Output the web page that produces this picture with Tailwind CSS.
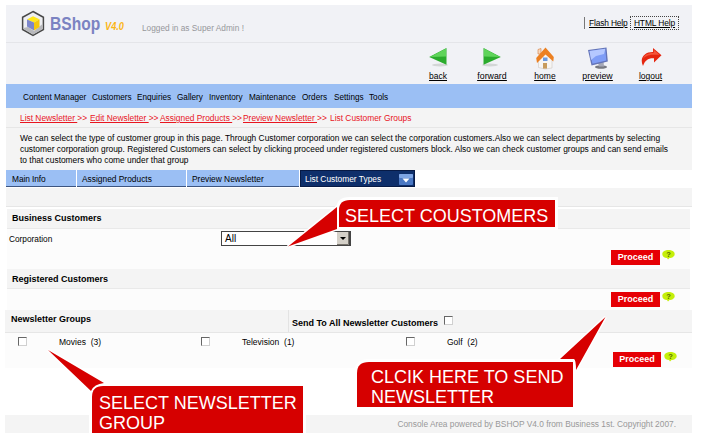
<!DOCTYPE html>
<html lang="en">
<head>
<meta charset="utf-8">
<title>BShop V4.0</title>
<script src="https://cdn.jsdelivr.net/npm/@tailwindcss/browser@4"></script>
</head>
<body class="bg-white">
<div class="relative w-[702px] h-[439px] overflow-hidden pt-[5px] pl-[6px] font-['Liberation_Sans',Arial,sans-serif] text-[8.5px] leading-[11px] text-black whitespace-nowrap">
  <header class="w-[686px] h-[79px] bg-[#f1f2f6]">
    <div class="h-[38px] flex border-b border-[#e4e5e9]">
      <svg class="w-[24px] h-[27px] ml-[15px] mt-[5px] shrink-0" viewBox="0 0 24 27">
        <path d="M12 1.5 22.4 7.3V19.5L12 25.5 1.6 19.5V7.3Z" fill="#eeeff2" stroke="#484848" stroke-width="1.5"/>
        <path d="M2.5 18 7 17 13 21 21.5 14V19.3L12 24.5 2.5 19Z" fill="#b7b8bc"/>
        <path d="M12 6.2 18.5 9.3 13 12.5 6 9.5Z" fill="#ffe81c"/>
        <path d="M6 9.500 13 12.5V20.500L6 16.500Z" fill="#7c86cb"/>
        <path d="M13 12.5 18.500 9.300V17L13 20.500Z" fill="#f3c70d"/>
      </svg>
      <b class="ml-[5px] mt-[9px] w-[50px] text-[17.5px] leading-[20px] text-[#7b83c2]"><span class="inline-block origin-left scale-x-[.89]">BShop</span></b>
      <b class="ml-[5px] mt-[16px] w-[37px] italic text-[10px] leading-[12px] text-[#fbb615]"><span class="inline-block origin-left scale-x-[.92]">V4.0</span></b>
      <span class="mt-[18px] text-[8.3px] text-[#96979b]">Logged in as Super Admin !</span>
      <div class="ml-auto mr-[13px] mt-[11px] h-[14px] flex text-[8.4px] tracking-[-0.15px] leading-[14px]">
        <a class="border-l border-[#777] pl-[4px] w-[46px] mt-[1px] h-[12px] leading-[13px] underline">Flash Help</a>
        <a class="border border-dotted border-[#444] w-[49px] text-center leading-[13px] tracking-[-0.1px] underline">HTML Help</a>
      </div>
    </div>
    <nav class="h-[41px] flex pt-[3px] pl-[405px] underline">
      <a class="w-[54px] flex flex-col items-center">
        <svg class="w-[20px] h-[21px]" viewBox="0 0 20 21"><ellipse cx="12" cy="19" rx="8" ry="1.5" fill="#d3d6d6"/><path d="M18.500 2V18.800L1.200 11Z" fill="#2bab2d"/><path d="M18 2.500V10.500L2 11Z" fill="#5fd45a"/></svg>
        <span class="mt-[4px]">back</span></a>
      <a class="w-[54px] flex flex-col items-center">
        <svg class="w-[20px] h-[21px]" viewBox="0 0 20 21"><ellipse cx="8" cy="19" rx="8" ry="1.5" fill="#d3d6d6"/><path d="M1.500 2V18.800L18.800 11Z" fill="#2bab2d"/><path d="M2 2.500V10.500L18 11Z" fill="#5fd45a"/></svg>
        <span class="mt-[4px] text-[8.8px]">forward</span></a>
      <a class="w-[52px] flex flex-col items-center">
        <svg class="w-[20px] h-[24px] -mb-[3px]" viewBox="0 0 20 24"><path d="M3.500 12 10 6 17 12V22L10 23 3.500 21.500Z" fill="#f7f5f3" stroke="#cfc8c4" stroke-width=".6"/><path d="M3 3.500 6 2.500V8H3Z" fill="#f7d9c0" stroke="#d77b35" stroke-width=".6"/><path d="M10.500 1.500 18.800 11 18.300 15.500 10.500 8.500 2 17 1.200 12Z" fill="#ec8022"/><path d="M8 11.500H12.500V15H8Z" fill="#6d9be0"/><path d="M8 17H12V22.600H8Z" fill="#c79b5d"/></svg>
        <span class="mt-[4px]">home</span></a>
      <a class="w-[53px] flex flex-col items-center">
        <svg class="w-[22px] h-[24px] -mb-[3px]" viewBox="0 0 22 24"><ellipse cx="14" cy="21" rx="6" ry="1.800" fill="#777981"/><path d="M11 17 16.500 15 17 20.500H12Z" fill="#a5a8b8"/><path d="M1 4 19.500 1.500 20.800 15.500 4.500 19.500Z" fill="#6474b8"/><path d="M2.500 5 18.300 2.800 19.300 14.500 5.500 17.800Z" fill="#7f9df6"/><path d="M2.500 5 18.300 2.800 17 8 9 10 4 14Z" fill="#b5c8ff"/></svg>
        <span class="mt-[4px] text-[8.8px]">preview</span></a>
      <a class="w-[53px] flex flex-col items-center">
        <svg class="w-[22px] h-[21px]" viewBox="0 0 22 21"><path d="M13 2 21.500 9.200 14 16.500V12.300C8 12 5 14.500 3 20 -1 11.500 5 5.800 13 6Z" fill="#e5260f"/><path d="M13.700 3.700 19.500 8.700 13 8.700C8 8.700 4 11 3 13 4 9 8 6.700 13.700 7Z" fill="#f4563a"/></svg>
        <span class="mt-[4px]">logout</span></a>
    </nav>
  </header>
  <nav class="w-[686px] h-[24px] bg-[#9bbff4] flex pl-[17px] leading-[27px] text-[8.2px]">
    <a class="w-[69px]">Content Manager</a><a class="w-[45px]">Customers</a><a class="w-[40px]">Enquiries</a><a class="w-[32px]">Gallery</a><a class="w-[40px]">Inventory</a><a class="w-[53px]">Maintenance</a><a class="w-[32px]">Orders</a><a class="w-[35px]">Settings</a><a>Tools</a>
  </nav>
  <div class="w-[686px] h-[20px] bg-[#f4f4f4] border-b border-[#e6e6e6] flex pl-[14px] leading-[21px] text-[#e8151f] text-[8.4px]">
    <span class="w-[70px]"><u>List Newsletter&nbsp;</u>&gt;&gt;</span><span class="w-[70px]"><u>Edit Newsletter&nbsp;</u>&gt;&gt;</span><span class="w-[83px]"><u>Assigned Products&nbsp;</u>&gt;&gt;</span><span class="w-[87px]"><u>Preview Newsletter&nbsp;</u>&gt;&gt;</span><span>List Customer Groups</span>
  </div>
  <div class="w-[686px] h-[42px] bg-[#f4f4f4] pl-[14px] pt-[5px] text-[8.4px] leading-[11px]">
    <p class="tracking-[0.016px]">We can select the type of customer group in this page. Through Customer corporation we can select the corporation customers.Also we can select departments by selecting</p>
    <p class="tracking-[0.003px]">customer corporation group. Registered Customers can select by clicking proceed under registered customers block. Also we can check customer groups and can send emails</p>
    <p>to that customers who come under that group</p>
  </div>
  <div class="h-[18px] flex gap-[1px] leading-[18px] text-[8.4px]">
    <a class="w-[70px] h-[17px] bg-[#9bbff4] border-b border-[#3d5580] pl-[6px] tracking-[-0.1px]">Main Info</a>
    <a class="w-[109px] h-[17px] bg-[#9bbff4] border-b border-[#3d5580] pl-[5px]">Assigned Products</a>
    <a class="w-[112px] h-[17px] bg-[#9bbff4] border-b border-[#3d5580] pl-[5px]">Preview Newsletter</a>
    <a class="w-[115px] h-[17px] bg-[#0e2f6b] border border-[#071a45] pl-[4px] pr-px flex justify-between text-white leading-[16px]">List Customer Types
      <svg class="w-[14px] h-[11px] mt-[3px]" viewBox="0 0 14 11"><rect width="14" height="11" rx="1" fill="#4a78c4"/><rect width="14" height="4" rx="1" fill="#7da5e4"/><path d="M3.5 4.5H10.5L7 8.5Z" fill="#fff"/></svg></a>
  </div>
  <div class="w-[686px] h-[19px] bg-[#f4f4f4] border-b border-[#e6e6e6]"></div>
  <section class="ml-px mt-[2px] w-[683px]">
    <h2 class="h-[20px] bg-[#f4f4f4] border-b border-[#e9e9e9] pl-[5px] font-bold text-[9px] leading-[19px]">Business Customers</h2>
    <div class="h-[19px] flex items-start bg-[#fcfcfc] pl-[2px]">
      <span class="w-[212px] leading-[20px] text-[8.3px]">Corporation</span>
      <div class="mt-[2px] w-[130px] h-[15px] bg-white border border-[#444] border-r-2 flex justify-between"><span class="pl-[3px] text-[10px] leading-[14px]">All</span>
        <svg class="w-[12px] h-[13px]" viewBox="0 0 12 13"><rect width="12" height="13" fill="#d4d0c8"/><path d="M11.5 0V12.5H0" fill="none" stroke="#77736c"/><path d="M3 5H9L6 8Z" fill="#000"/></svg></div>
    </div>
    <div class="h-[21px] bg-[#fcfcfc] flex pl-[604px] pt-[1px]">
      <button class="w-[49px] h-[15px] mt-px bg-[#e60005] text-white font-bold text-[9px] leading-[15px]">Proceed</button>
      <svg class="ml-[2px] w-[13px] h-[11px]" viewBox="0 0 13 11"><path d="M6.5 1C10 1 12.7 2.6 12.7 5 12.7 7.5 10 9 7.5 9L6 10.5 5 9C2.5 9 .3 7.5 .3 5 .3 2.6 3 1 6.5 1Z" fill="#c5ef0a"/><text x="6.5" y="7.8" text-anchor="middle" font-size="7.5" font-weight="bold" fill="#526d00">?</text></svg>
    </div>
  </section>
  <section class="ml-px w-[683px]">
    <h2 class="h-[20px] bg-[#f4f4f4] border-b border-[#e9e9e9] pl-[5px] font-bold text-[9px] leading-[20px]">Registered Customers</h2>
    <div class="h-[21px] bg-[#fcfcfc] flex pl-[604px] pt-[2px]">
      <button class="w-[49px] h-[15px] mt-px bg-[#e60005] text-white font-bold text-[9px] leading-[15px]">Proceed</button>
      <svg class="ml-[2px] w-[13px] h-[11px]" viewBox="0 0 13 11"><path d="M6.5 1C10 1 12.7 2.6 12.7 5 12.7 7.5 10 9 7.5 9L6 10.5 5 9C2.5 9 .3 7.5 .3 5 .3 2.6 3 1 6.5 1Z" fill="#c5ef0a"/><text x="6.5" y="7.8" text-anchor="middle" font-size="7.5" font-weight="bold" fill="#526d00">?</text></svg>
    </div>
  </section>
  <section class="-ml-px w-[687px]">
    <div class="h-[23px] bg-[#f4f4f4] border-b border-[#e6e6e6] flex font-bold text-[9px]">
      <h2 class="w-[284px] border-r border-[#e3e3e3] pl-[6px] leading-[19px]">Newsletter Groups</h2>
      <label class="pl-[3px] leading-[26px] w-[155px]">Send To All Newsletter Customers</label>
      <i class="mt-[6px] w-[9px] h-[9px] bg-white border border-[#d0d0d0] border-t-[#666] border-l-[#666]"></i>
    </div>
    <div class="h-[35px] bg-[#fcfcfc] flex leading-[18px] pl-[13px]">
      <i class="mt-[4px] w-[9px] h-[9px] bg-white border border-[#d0d0d0] border-t-[#666] border-l-[#666]"></i><span class="pl-[32px] w-[174px]">Movies&nbsp; (3)</span>
      <i class="mt-[4px] w-[9px] h-[9px] bg-white border border-[#d0d0d0] border-t-[#666] border-l-[#666]"></i><span class="pl-[32px] w-[196px]">Television&nbsp; (1)</span>
      <i class="mt-[4px] w-[9px] h-[9px] bg-white border border-[#d0d0d0] border-t-[#666] border-l-[#666]"></i><span class="pl-[32px] w-[198px]">Golf&nbsp; (2)</span>
      <button class="w-[48px] h-[15px] mt-[19px] bg-[#e60005] text-white font-bold text-[9px] leading-[15px]">Proceed</button>
      <svg class="ml-[3px] mt-[18px] w-[13px] h-[11px]" viewBox="0 0 13 11"><path d="M6.5 1C10 1 12.7 2.6 12.7 5 12.7 7.5 10 9 7.5 9L6 10.5 5 9C2.5 9 .3 7.5 .3 5 .3 2.6 3 1 6.5 1Z" fill="#c5ef0a"/><text x="6.5" y="7.8" text-anchor="middle" font-size="7.5" font-weight="bold" fill="#526d00">?</text></svg>
    </div>
  </section>
  <footer class="-ml-px mt-[47px] w-[687px] h-[18px] bg-[#f4f4f4] text-right pr-[16px] leading-[19px] text-[8.35px] text-[#999]">Console Area powered by BSHOP V4.0 from Business 1st. Copyright 2007.</footer>

  <svg class="absolute left-0 top-0 w-[702px] h-[439px]" viewBox="0 0 702 439">
    <g fill="#d60000" stroke="#fff" stroke-width="6" paint-order="stroke">
      <path d="M339 227V210Q339 200 350 200H555V227Z"/>
      <path d="M92 433V397Q92 386 103 386H303V433Z"/>
      <path d="M357 407V373Q357 362 369 362H573V407Z"/>
    </g>
    <g fill="#d60000" stroke="#fff" stroke-width="3" paint-order="stroke">
      <path d="M288 246.500 337 207V229Z"/>
      <path d="M48 350 104 383Q94 384 91 391Z"/>
      <path d="M605.500 317 560 359H574Q576 360 576 370Z"/>
    </g>
  </svg>
  <div class="absolute left-[345px] top-[206px] text-white text-[18px] leading-[20px]">SELECT COUSTOMERS</div>
  <div class="absolute left-[99px] top-[393px] text-white text-[18px] leading-[20px]">SELECT NEWSLETTER<br>GROUP</div>
  <div class="absolute left-[371px] top-[367px] text-white text-[18px] leading-[20px]">CLCIK HERE TO SEND<br>NEWSLETTER</div>
</div>
</body>
</html>
